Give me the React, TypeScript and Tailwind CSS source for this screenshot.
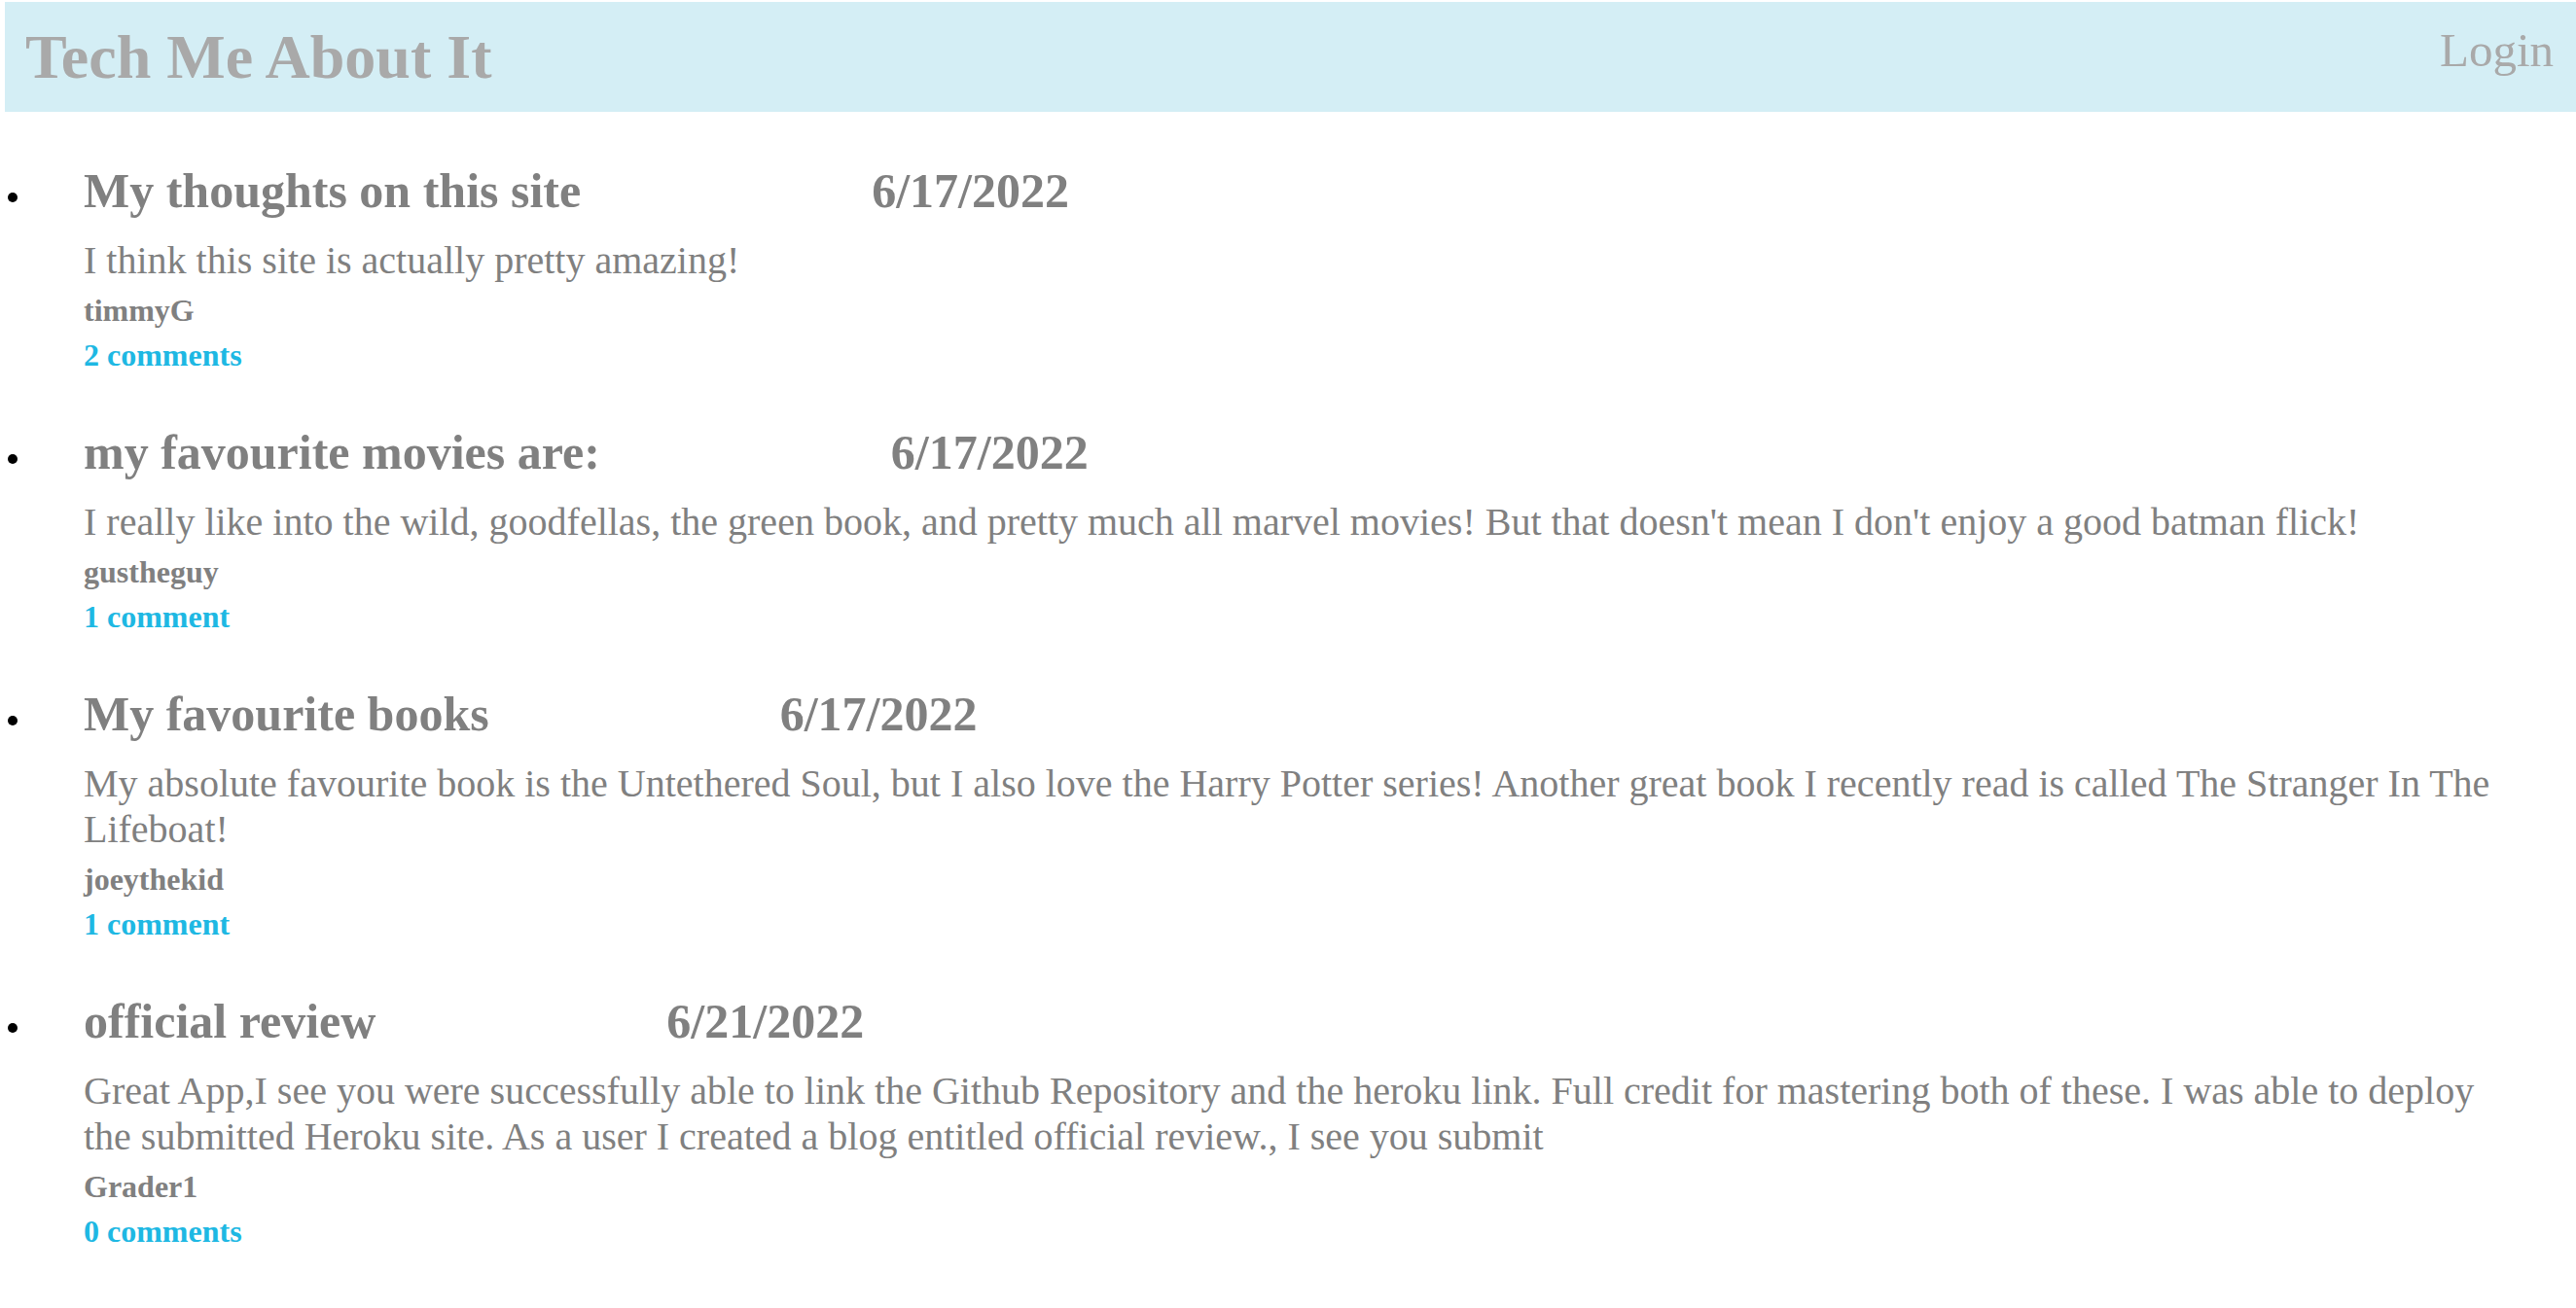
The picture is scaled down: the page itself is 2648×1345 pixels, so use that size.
const posts = [
  {
    title: "My thoughts on this site",
    date: "6/17/2022",
    body: "I think this site is actually pretty amazing!",
    author: "timmyG",
    comments: "2 comments",
  },
  {
    title: "my favourite movies are:",
    date: "6/17/2022",
    body: "I really like into the wild, goodfellas, the green book, and pretty much all marvel movies! But that doesn't mean I don't enjoy a good batman flick!",
    author: "gustheguy",
    comments: "1 comment",
  },
  {
    title: "My favourite books",
    date: "6/17/2022",
    body: "My absolute favourite book is the Untethered Soul, but I also love the Harry Potter series! Another great book I recently read is called The Stranger In The Lifeboat!",
    author: "joeythekid",
    comments: "1 comment",
  },
  {
    title: "official review",
    date: "6/21/2022",
    body: "Great App,I see you were successfully able to link the Github Repository and the heroku link. Full credit for mastering both of these. I was able to deploy the submitted Heroku site. As a user I created a blog entitled official review., I see you submit",
    author: "Grader1",
    comments: "0 comments",
  },
];

const App = () => {
  return (
    <div className="bg-white pt-[2px] font-['Liberation_Serif','Times_New_Roman',serif]">
      <header className="ml-[5px] flex h-[113px] items-start justify-between bg-[#d4eef5] pl-[21px] pr-[23px] pt-[25px]">
        <h1 className="text-[64px] font-bold leading-none text-[#a9a9a9]">
          Tech Me About It
        </h1>
        <a href="#" className="text-[49px] leading-none text-[#a9a9a9]">
          Login
        </a>
      </header>

      {/* list of blog posts */}
      <ul className="mt-[52px] flex flex-col gap-[48px] pr-[60px]">
        {posts.map((post) => (
          <li key={post.title} className="flex">
            <div className="w-[86px] shrink-0">
              <div className="ml-[8px] mt-[31px] h-[10px] w-[10px] rounded-full bg-black" />
            </div>
            <div className="min-w-0 flex-1 text-[#808080]">
              <h2 className="whitespace-nowrap text-[50px] font-bold leading-[58px]">
                <span>{post.title}</span>
                <span className="ml-[299px]">{post.date}</span>
              </h2>
              <p className="mt-[19px] text-[40px] leading-[47px]">{post.body}</p>
              <p className="mt-[5px] text-[32px] font-bold leading-[46px]">
                {post.author}
              </p>
              <a
                href="#"
                className="block text-[32px] font-bold leading-[46px] text-[#1eb8e3]"
              >
                {post.comments}
              </a>
            </div>
          </li>
        ))}
      </ul>
    </div>
  );
};

export default App;
